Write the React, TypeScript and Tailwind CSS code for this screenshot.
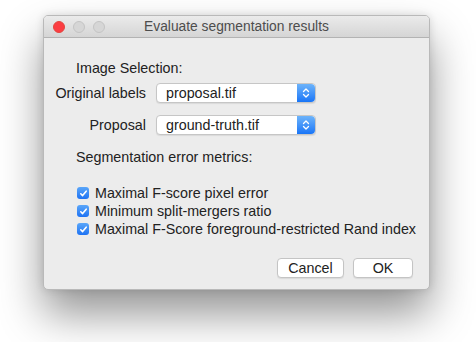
import React from "react";

const FONT = { fontFamily: '"Liberation Sans", Arial, Helvetica, sans-serif' };

function Stepper() {
  return (
    <div className="flex h-full w-[18px] items-center justify-center rounded-r-[4px] bg-gradient-to-b from-[#6cb3fa] to-[#1775f7]">
      <svg width="8" height="12" viewBox="0 0 8 12" fill="none">
        <path d="M1.5 4.5 L4 2 L6.5 4.5" stroke="white" strokeWidth="1.3" strokeLinecap="round" strokeLinejoin="round" />
        <path d="M1.5 7.5 L4 10 L6.5 7.5" stroke="white" strokeWidth="1.3" strokeLinecap="round" strokeLinejoin="round" />
      </svg>
    </div>
  );
}

function PopUp({ value }: { value: string }) {
  return (
    <div className="flex h-[20px] w-[160px] items-center justify-between rounded-[4px] border border-[#c6c6c6] bg-white shadow-[0_1px_1px_rgba(0,0,0,0.08)]">
      <span className="pl-[9px] text-[14.3px] leading-none text-[#222]">{value}</span>
      <Stepper />
    </div>
  );
}

function Check({ label }: { label: string }) {
  return (
    <div className="flex h-[18px] items-center gap-[6px]">
      <div className="flex h-[12px] w-[12px] items-center justify-center rounded-[3px] bg-gradient-to-b from-[#5aa6f9] to-[#1d72f3]">
        <svg width="9" height="9" viewBox="0 0 9 9" fill="none">
          <path d="M1.8 4.8 L3.6 6.6 L7.2 2.2" stroke="white" strokeWidth="1.6" strokeLinecap="round" strokeLinejoin="round" />
        </svg>
      </div>
      <span className="text-[14.3px] leading-[18px] text-[#222]">{label}</span>
    </div>
  );
}

function Button({ label, w }: { label: string; w: string }) {
  return (
    <button className={`flex h-[20px] items-center justify-center rounded-[4px] border border-[#c4c4c4] bg-white text-[14.3px] leading-none text-[#222] shadow-[0_1px_1px_rgba(0,0,0,0.08)] ${w}`}>
      {label}
    </button>
  );
}

export default function App() {
  return (
    <div className="h-[342px] w-[476px] overflow-hidden bg-white pl-[43px] pt-[15px]" style={FONT}>
      <div className="flex h-[275px] w-[387px] flex-col overflow-hidden rounded-[5px] border border-[#b9b9b9] bg-[#ececec] shadow-[0_24px_44px_rgba(0,0,0,0.42),0_0_8px_rgba(0,0,0,0.12)]">
        <div className="relative flex h-[22px] shrink-0 items-center border-b border-[#b3b3b3] bg-gradient-to-b from-[#ebebeb] to-[#d5d5d5]">
          <div className="absolute left-[9px] top-[5px] flex gap-[8px]">
            <div className="h-[12px] w-[12px] rounded-full border border-[#e2463f] bg-[#fc3d42]" />
            <div className="h-[12px] w-[12px] rounded-full border border-[#c4c4c4] bg-[#d6d6d6]" />
            <div className="h-[12px] w-[12px] rounded-full border border-[#c4c4c4] bg-[#d6d6d6]" />
          </div>
          <div className="w-full text-center text-[13.8px] leading-[22px] text-[#4d4d4d]">Evaluate segmentation results</div>
        </div>

        <div className="flex flex-1 flex-col">
          <div className="ml-[32px] mt-[22px] h-[16px] text-[14.3px] leading-[16px] text-[#222]">Image Selection:</div>

          <div className="mt-[7px] grid grid-cols-[102px_160px] items-center gap-x-[10px] gap-y-[12px]">
            <div className="text-right text-[14.3px] leading-[20px] text-[#222]">Original labels</div>
            <PopUp value="proposal.tif" />
            <div className="text-right text-[14.3px] leading-[20px] text-[#222]">Proposal</div>
            <PopUp value="ground-truth.tif" />
          </div>

          <div className="ml-[32px] mt-[14px] h-[16px] text-[14.3px] leading-[16px] text-[#222]">Segmentation error metrics:</div>

          <div className="ml-[33px] mt-[19px] flex flex-col">
            <Check label="Maximal F-score pixel error" />
            <Check label="Minimum split-mergers ratio" />
            <Check label="Maximal F-Score foreground-restricted Rand index" />
          </div>

          <div className="mr-[16px] mt-[20px] flex justify-end gap-[9px]">
            <Button label="Cancel" w="w-[67px]" />
            <Button label="OK" w="w-[60px]" />
          </div>
        </div>
      </div>
    </div>
  );
}
